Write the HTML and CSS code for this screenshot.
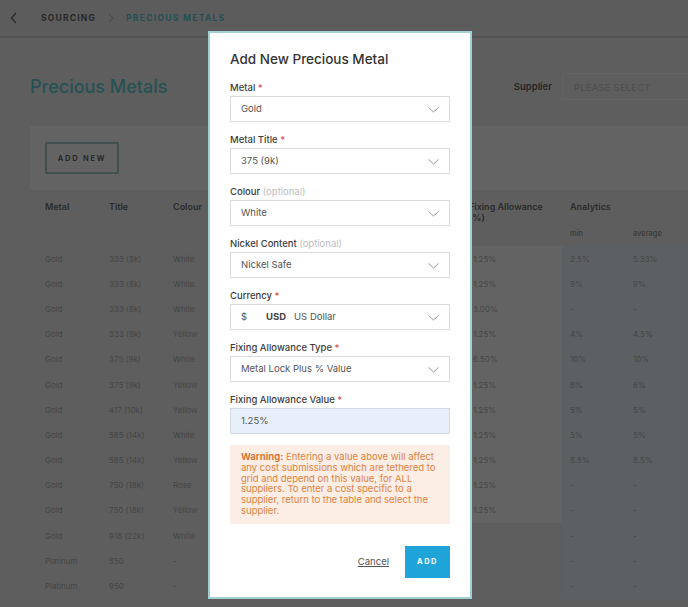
FILE: index.html
```html
<!DOCTYPE html>
<html lang="en">
<head>
    <meta charset="UTF-8">
    <meta name="viewport" content="width=device-width, initial-scale=1.0">
    <title>Precious Metals - Sourcing</title>
    <link rel="stylesheet" href="styles.css">
</head>
<body>

<header class="topbar">
    <svg class="back" width="8" height="12" viewBox="0 0 8 12"><polyline points="6,1 1.5,6 6,11" fill="none" stroke="#6c6c6c" stroke-width="1.3"/></svg>
    <nav class="crumbs">
        <span class="crumb">SOURCING</span>
        <svg class="sep" width="6" height="10" viewBox="0 0 6 10"><polyline points="1,1 5,5 1,9" fill="none" stroke="#c4c4c4" stroke-width="1.1"/></svg>
        <span class="crumb current">PRECIOUS METALS</span>
    </nav>
</header>

<main class="page">
    <div class="page-head">
        <h1>Precious Metals</h1>
        <div class="supplier">
            <span class="supplier-label">Supplier</span>
            <div class="ghost-select">PLEASE SELECT</div>
        </div>
    </div>

    <div class="toolbar">
        <button class="btn-outline">ADD NEW</button>
    </div>

    <table class="grid">
        <colgroup>
            <col style="width:15px">
            <col style="width:64px">
            <col style="width:64px">
            <col style="width:64px">
            <col style="width:112px">
            <col style="width:112px">
            <col style="width:101px">
            <col style="width:63px">
            <col style="width:63px">
        </colgroup>
        <thead>
            <tr class="head-main">
                <th></th>
                <th><div>Metal</div></th>
                <th><div>Title</div></th>
                <th><div>Colour</div></th>
                <th><div>Nickel Content</div></th>
                <th><div>Currency</div></th>
                <th class="fix-head"><div>Fixing Allowance (%)</div></th>
                <th colspan="2" class="ana-head"><div>Analytics</div></th>
            </tr>
            <tr class="head-sub">
                <th></th><th></th><th></th><th></th><th></th><th></th><th></th>
                <th>min</th>
                <th>average</th>
            </tr>
        </thead>
        <tbody id="rows"></tbody>
    </table>
</main>

<div class="backdrop"></div>

<div class="modal">
    <h2>Add New Precious Metal</h2>

    <div class="field">
        <label>Metal <span class="req">*</span></label>
        <div class="select">Gold<svg class="chev" width="11" height="6" viewBox="0 0 11 6"><polyline points="0.5,0.5 5.5,5 10.5,0.5" fill="none" stroke="#999" stroke-width="1"/></svg></div>
    </div>
    <div class="field">
        <label>Metal Title <span class="req">*</span></label>
        <div class="select">375 (9k)<svg class="chev" width="11" height="6" viewBox="0 0 11 6"><polyline points="0.5,0.5 5.5,5 10.5,0.5" fill="none" stroke="#999" stroke-width="1"/></svg></div>
    </div>
    <div class="field">
        <label>Colour <span class="opt">(optional)</span></label>
        <div class="select">White<svg class="chev" width="11" height="6" viewBox="0 0 11 6"><polyline points="0.5,0.5 5.5,5 10.5,0.5" fill="none" stroke="#999" stroke-width="1"/></svg></div>
    </div>
    <div class="field">
        <label>Nickel Content <span class="opt">(optional)</span></label>
        <div class="select">Nickel Safe<svg class="chev" width="11" height="6" viewBox="0 0 11 6"><polyline points="0.5,0.5 5.5,5 10.5,0.5" fill="none" stroke="#999" stroke-width="1"/></svg></div>
    </div>
    <div class="field">
        <label>Currency <span class="req">*</span></label>
        <div class="select"><span class="cur-sym">$</span><span class="cur-code">USD</span>US Dollar<svg class="chev" width="11" height="6" viewBox="0 0 11 6"><polyline points="0.5,0.5 5.5,5 10.5,0.5" fill="none" stroke="#999" stroke-width="1"/></svg></div>
    </div>
    <div class="field">
        <label>Fixing Allowance Type <span class="req">*</span></label>
        <div class="select">Metal Lock Plus % Value<svg class="chev" width="11" height="6" viewBox="0 0 11 6"><polyline points="0.5,0.5 5.5,5 10.5,0.5" fill="none" stroke="#999" stroke-width="1"/></svg></div>
    </div>
    <div class="field">
        <label>Fixing Allowance Value <span class="req">*</span></label>
        <div class="select active">1.25%</div>
    </div>

    <div class="warning">
        <strong>Warning:</strong> Entering a value above will affect any cost submissions which are tethered to grid and depend on this value, for ALL suppliers. To enter a cost specific to a supplier, return to the table and select the supplier.
    </div>

    <div class="actions">
        <a class="cancel">Cancel</a>
        <button class="btn-add">ADD</button>
    </div>
</div>

<script>
    const metals = [
        ["Gold", "333 (8k)", "White", "1.25%", "2.5%", "5.33%"],
        ["Gold", "333 (8k)", "White", "1.25%", "9%", "9%"],
        ["Gold", "333 (8k)", "White", "3.00%", "-", "-"],
        ["Gold", "333 (8k)", "Yellow", "1.25%", "4%", "4.5%"],
        ["Gold", "375 (9k)", "White", "6.50%", "10%", "10%"],
        ["Gold", "375 (9k)", "Yellow", "1.25%", "6%", "6%"],
        ["Gold", "417 (10k)", "Yellow", "1.25%", "5%", "5%"],
        ["Gold", "585 (14k)", "White", "1.25%", "5%", "5%"],
        ["Gold", "585 (14k)", "Yellow", "1.25%", "8.5%", "8.5%"],
        ["Gold", "750 (18k)", "Rose", "1.25%", "-", "-"],
        ["Gold", "750 (18k)", "Yellow", "1.25%", "-", "-"],
        ["Gold", "916 (22k)", "White", "", "-", "-"],
        ["Platinum", "850", "-", "", "-", "-"],
        ["Platinum", "950", "-", "", "-", "-"]
    ];

    const tbody = document.getElementById("rows");
    metals.forEach(m => {
        const row = document.createElement("tr");
        row.innerHTML = `
            <td></td>
            <td>${m[0]}</td>
            <td>${m[1]}</td>
            <td>${m[2]}</td>
            <td>Nickel Safe</td>
            <td>USD</td>
            <td class="${m[3] ? 'fix' : ''}">${m[3]}</td>
            <td class="ana">${m[4]}</td>
            <td class="ana">${m[5]}</td>
        `;
        tbody.appendChild(row);
    });
</script>

</body>
</html>
```

FILE: styles.css
```css
body {
    font-family: 'Inter', 'Noto Sans', Arial, sans-serif;
    margin: 0;
    padding: 0;
    background-color: #f2f2f2;
    color: #666;
    overflow: hidden;
}
.topbar {
    display: flex;
    align-items: center;
    height: 36px;
    padding-left: 10px;
    background-color: #ececec;
    border-bottom: 2px solid #d2d2d2;
}
.back {
    margin-right: 23px;
}
.crumbs {
    display: flex;
    align-items: center;
    gap: 12px;
}
.crumb {
    font-size: 8.5px;
    font-weight: 700;
    letter-spacing: 1.2px;
    color: #6a6a6a;
}
.crumb.current {
    color: #5ccfd2;
    letter-spacing: 1.3px;
}
.page {
    padding-left: 30px;
}
.page-head {
    display: flex;
    align-items: center;
    justify-content: space-between;
    box-sizing: border-box;
    height: 88px;
    padding-top: 9px;
}
h1 {
    margin: 0;
    font-size: 18px;
    font-weight: 500;
    color: #62d4d6;
}
.supplier {
    display: flex;
    align-items: center;
    gap: 10px;
}
.supplier-label {
    font-size: 9.5px;
    font-weight: 600;
    color: #666;
}
.ghost-select {
    width: 126px;
    height: 27px;
    line-height: 27px;
    padding-left: 11px;
    box-sizing: border-box;
    border: 1px solid #fff;
    border-right: none;
    font-size: 9.5px;
    color: #c6c6c6;
    letter-spacing: 0.2px;
}
.toolbar {
    display: flex;
    align-items: center;
    height: 64px;
    padding-left: 15px;
    background-color: #fff;
}
.btn-outline {
    width: 74px;
    height: 32px;
    background: transparent;
    border: 2px solid #a8cccc;
    font-family: inherit;
    font-size: 7.5px;
    font-weight: 600;
    letter-spacing: 1.8px;
    color: #5c5c5c;
    padding: 0;
}
.grid {
    table-layout: fixed;
    width: 658px;
    border-collapse: collapse;
    margin-top: 5px;
}
.grid th {
    text-align: left;
    font-size: 9px;
    font-weight: 600;
    color: #717171;
    vertical-align: top;
    padding: 0;
}
.head-main th {
    padding-top: 6px;
    padding-bottom: 9px;
}
.head-main th div {
    height: 11px;
    line-height: 11px;
    white-space: nowrap;
}
.head-main th.fix-head {
    padding-left: 8px;
}
.head-main th.fix-head div {
    white-space: normal;
    width: 86px;
}
.head-main th.ana-head {
    padding-left: 8px;
}
.head-sub th {
    height: 25px;
    padding-left: 8px;
    font-size: 7.5px;
    font-weight: 500;
    line-height: 25px;
    color: #979797;
}
.grid td {
    height: 25.2px;
    padding: 0;
    font-size: 8px;
    color: #b4b4b4;
    white-space: nowrap;
}
.grid td.fix {
    background-color: #fff;
    padding-left: 12px;
}
.grid td.ana {
    background-color: #ecf7fc;
    padding-left: 8px;
}
.backdrop {
    position: fixed;
    inset: 0;
    background-color: rgba(0, 0, 0, 0.61);
}
.modal {
    position: fixed;
    top: 31px;
    left: 208px;
    width: 264px;
    box-sizing: border-box;
    padding: 16px 20px 19px;
    background-color: #fff;
    border: 2px solid #9fd0d2;
}
.modal h2 {
    margin: 0 0 13px;
    font-size: 13.5px;
    font-weight: 500;
    line-height: 20px;
    color: #333;
}
.field {
    margin-bottom: 12px;
}
.field label {
    display: block;
    font-size: 9.5px;
    font-weight: 500;
    line-height: 12px;
    margin-bottom: 2px;
    color: #3d3d3d;
}
.req {
    color: #d9534f;
}
.opt {
    font-weight: 400;
    color: #bdbdbd;
}
.select {
    position: relative;
    height: 26px;
    line-height: 24px;
    box-sizing: border-box;
    padding-left: 10px;
    border: 1px solid #dcdcdc;
    font-size: 9.5px;
    color: #555;
}
.select.active {
    background-color: #e8effb;
    border-color: #d3d9e4;
}
.chev {
    position: absolute;
    right: 10px;
    top: 10px;
}
.cur-sym {
    display: inline-block;
    width: 25px;
}
.cur-code {
    font-weight: 700;
    margin-right: 8px;
    color: #444;
}
.warning {
    margin-top: -1px;
    padding: 7px 11px;
    background-color: #fdeee5;
    color: #e0823f;
    font-size: 9.5px;
    line-height: 10.8px;
}
.warning strong {
    font-weight: 700;
    color: #d9763a;
}
.actions {
    display: flex;
    justify-content: flex-end;
    align-items: center;
    gap: 16px;
    margin-top: 22px;
}
.cancel {
    font-size: 9.5px;
    color: #555;
    text-decoration: underline;
}
.btn-add {
    width: 45px;
    height: 32px;
    padding: 0;
    border: none;
    background-color: #1ea4d8;
    color: #fff;
    font-family: inherit;
    font-size: 7.5px;
    font-weight: 700;
    letter-spacing: 1.5px;
}
```
